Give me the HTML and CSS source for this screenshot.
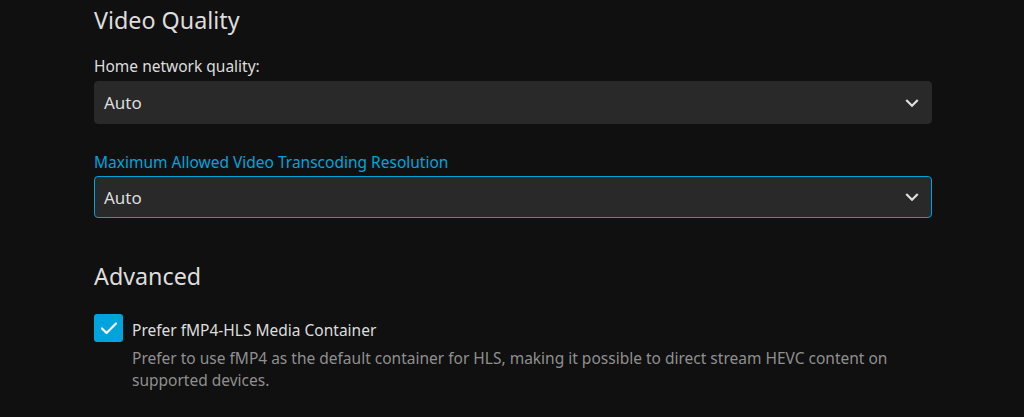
FILE: index.html
```html
<!DOCTYPE html>
<html>
<head>
<meta charset="utf-8">
<link rel="stylesheet" href="styles.css">
</head>
<body>
<div class="page">
  <h2 class="section-title">Video Quality</h2>
  <div class="field">
    <label class="field-label">Home network quality:</label>
    <div class="select">
      <span>Auto</span>
      <svg class="chev" viewBox="0 0 24 24" width="26" height="26"><path d="M7.4 8.6 12 13.2l4.6-4.6L18 10l-6 6-6-6z" fill="#e0e0e0"/></svg>
    </div>
  </div>
  <div class="field">
    <label class="field-label focused">Maximum Allowed Video Transcoding Resolution</label>
    <div class="select focused">
      <span>Auto</span>
      <svg class="chev" viewBox="0 0 24 24" width="26" height="26"><path d="M7.4 8.6 12 13.2l4.6-4.6L18 10l-6 6-6-6z" fill="#e0e0e0"/></svg>
    </div>
  </div>
  <h2 class="section-title advanced">Advanced</h2>
  <div class="check-row">
    <div class="checkbox">
      <svg viewBox="0 0 24 24" width="24" height="24"><path d="M5 12.5l4.5 4.5L19 7.5" fill="none" stroke="#fff" stroke-width="2.2" stroke-linecap="round" stroke-linejoin="round"/></svg>
    </div>
    <div class="check-text">
      <div class="check-label">Prefer fMP4-HLS Media Container</div>
      <div class="check-desc">Prefer to use fMP4 as the default container for HLS, making it possible to direct stream HEVC content on supported devices.</div>
    </div>
  </div>
</div>
</body>
</html>
```
FILE: styles.css
```css
html, body {
  margin: 0;
  padding: 0;
  background: #101010;
  height: 100%;
  overflow: hidden;
}
body {
  font-family: "Noto Sans", "Open Sans", sans-serif;
  color: rgba(255,255,255,0.87);
}
.page {
  width: 838px;
  padding-left: 94px;
}
.section-title {
  margin: 0;
  font-size: 23.3px;
  font-weight: 400;
  line-height: 32px;
  padding-top: 4px;
  color: #dddddd;
}
.field {
  display: flex;
  flex-direction: column;
}
.field-label {
  font-size: 15.5px;
  line-height: 20px;
  color: #dddddd;
  margin-top: 20px;
  margin-bottom: 5px;
}
.field-label.focused {
  color: #00a4dc;
  margin-top: 28px;
  margin-bottom: 4px;
}
.select {
  height: 43px;
  box-sizing: border-box;
  background: #292929;
  border-radius: 4px;
  display: flex;
  align-items: center;
  justify-content: space-between;
  padding: 0 6px 0 9px;
  font-size: 17px;
  color: #dddddd;
  border: 1px solid #292929;
}
.select.focused {
  border-color: #00a4dc;
  height: 42px;
}
.chev {
  display: block;
}
.advanced {
  margin-top: 38px;
}
.check-row {
  display: flex;
  margin-top: 22px;
}
.checkbox {
  width: 29px;
  height: 28px;
  background: #00a4dc;
  border-radius: 3px;
  display: flex;
  align-items: center;
  justify-content: center;
  flex: none;
}
.check-text {
  margin-left: 9px;
  padding-top: 5px;
}
.check-label {
  font-size: 15.5px;
  line-height: 22px;
  color: #dddddd;
}
.check-desc {
  font-size: 15.5px;
  line-height: 22px;
  color: #8f8f8f;
  margin-top: 6px;
}
```
